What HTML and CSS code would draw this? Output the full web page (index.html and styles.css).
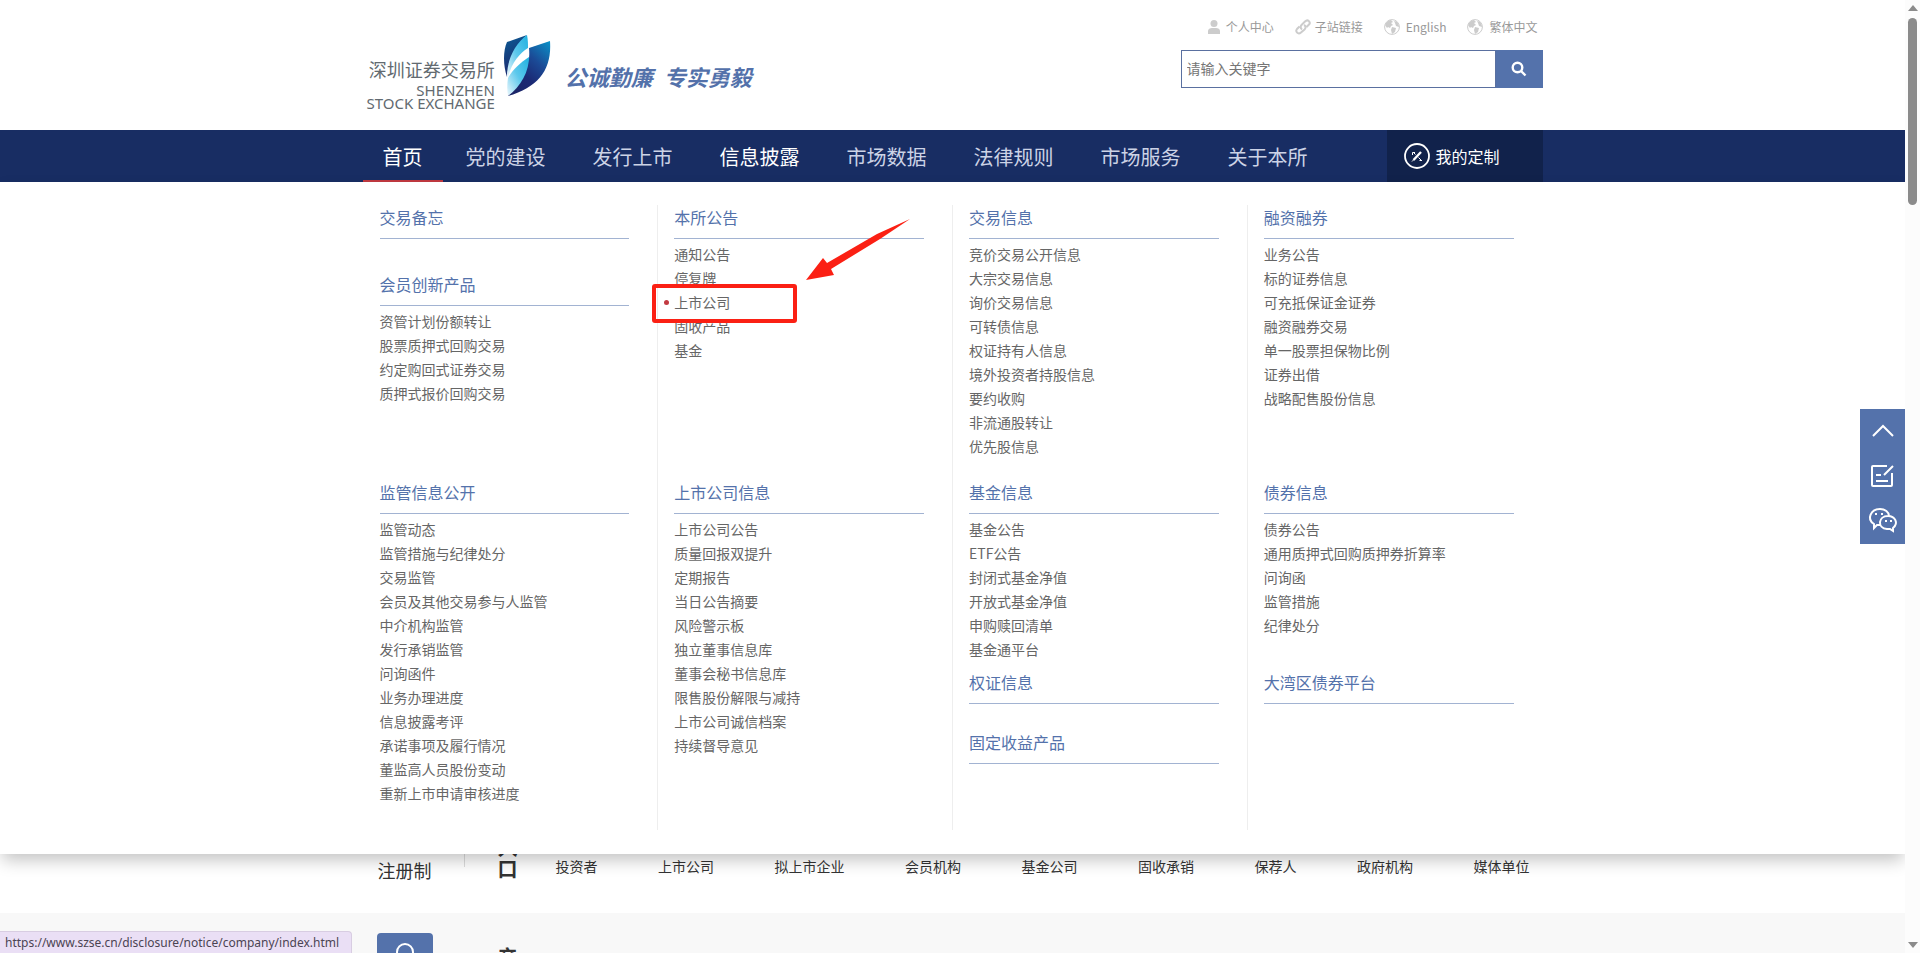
FILE: index.html
```html
<!DOCTYPE html>
<html lang="zh-CN">
<head>
<meta charset="utf-8">
<title>深圳证券交易所</title>
<link rel="stylesheet" href="styles.css">
</head>
<body>
<div class="page">
  <header class="header container">
    <a class="brand" href="#">
      <span class="brand-name">
        <span class="brand-cn">深圳证券交易所</span>
        <span class="brand-en">SHENZHEN</span>
        <span class="brand-en">STOCK EXCHANGE</span>
      </span>
      <svg class="emblem" viewBox="0 0 48 62" aria-hidden="true">
        <defs>
          <linearGradient id="g1" x1="0" y1="0" x2="0.3" y2="1"><stop offset="0" stop-color="#0b5d96"/><stop offset="0.5" stop-color="#14407f"/><stop offset="1" stop-color="#1c2a70"/></linearGradient>
          <linearGradient id="g2" x1="1" y1="0" x2="0" y2="1"><stop offset="0" stop-color="#1fb0e0"/><stop offset="0.5" stop-color="#5cc8ec"/><stop offset="1" stop-color="#eef8fd"/></linearGradient>
          <linearGradient id="g3" x1="1" y1="0" x2="0.3" y2="1"><stop offset="0" stop-color="#0a93c9"/><stop offset="0.4" stop-color="#1b4a96"/><stop offset="0.7" stop-color="#1b2a75"/><stop offset="1" stop-color="#1a2568"/></linearGradient>
        </defs>
        <path fill="url(#g1)" d="M4 7 24 0C14 10 6 22 4 42C0 30 0 16 4 7Z"/>
        <path fill="url(#g2)" d="M24 0C25 5 25 9 25 13C17 18 9 27 5 42H4C4 24 12 9 24 0Z"/>
        <path fill="url(#g2)" d="M26 22C29 38 17 52 5 61C4 54 4 49 5 43C10 34 17 28 26 22Z"/>
        <path fill="url(#g3)" d="M26 13 47 6C49 34 36 52 5 61C19 50 28 35 26 13Z"/>
      </svg>
      <span class="slogan">公诚勤廉&ensp;专实勇毅</span>
    </a>
    <div class="header-side">
      <nav class="quick" aria-label="快捷链接">
        <a href="#"><svg class="ico" viewBox="0 0 16 16"><circle cx="8" cy="4.500" r="3.500"/><path d="M2 15v-3c0-2 2-3 4-3h4c2 0 4 1 4 3v3z"/></svg>个人中心</a>
        <a href="#"><svg class="ico line" viewBox="0 0 16 16"><path d="M7 10.500C5 9 5.500 7 6.500 6L10 2.500c3-3 6 1 4 3L11.500 8M9 6c2 1 2 3 .5 4.500L6 13.500c-3 2.500-6-1-4-3.500L4.500 7.500"/></svg>子站链接</a>
        <a href="#" class="wide"><svg class="ico" viewBox="0 0 16 16"><use href="#globe"/></svg>English</a>
        <a href="#" class="wide"><svg class="ico" viewBox="0 0 16 16"><g id="globe"><circle cx="8" cy="8" r="7.400" fill="none" stroke="#ccc"/><path d="M1 6C2 3 5 1 7 1l2 2-2 1 2 2-2 1-1 2-2-1-1 1zM10 2c3 0 5 3 5 6l-3-1-1-3zM8 8l4 1-1 4-3 2-1-4z"/></g></svg>繁体中文</a>
      </nav>
      <form class="search">
        <input type="text" placeholder="请输入关键字" aria-label="请输入关键字">
        <button type="button" aria-label="搜索"><svg viewBox="0 0 16 16"><circle cx="6.500" cy="6.500" r="4.800"/><path d="M10 10l4.500 4.500"/></svg></button>
      </form>
    </div>
  </header>

  <div class="navbar">
    <div class="container nav-row">
      <nav class="nav" aria-label="主导航">
        <a class="home" href="#">首页</a>
        <a href="#">党的建设</a>
        <a href="#">发行上市</a>
        <a class="open" href="#">信息披露</a>
        <a href="#">市场数据</a>
        <a href="#">法律规则</a>
        <a href="#">市场服务</a>
        <a href="#">关于本所</a>
      </nav>
      <a class="custom" href="#"><svg viewBox="0 0 26 26"><circle cx="13" cy="13" r="12" stroke-width="1.800"/><path stroke-width="2.400" d="M9.500 17l7.500-8"/><path d="M8.500 12V9.500h2.500M9 9l2.500 2.500M15.500 17.500h2.500M14.500 14.500l3 3M8 18.500l2-2"/></svg>我的定制</a>
    </div>

    <div class="mega">
      <div class="container mega-grid">
        <div class="cell">
          <section class="group"><h3><a href="#">交易备忘</a></h3></section>
          <section class="group spaced">
            <h3><a href="#">会员创新产品</a></h3>
            <ul><li><a href="#">资管计划份额转让</a></li><li><a href="#">股票质押式回购交易</a></li><li><a href="#">约定购回式证券交易</a></li><li><a href="#">质押式报价回购交易</a></li></ul>
          </section>
        </div>
        <div class="cell">
          <section class="group">
            <h3><a href="#">本所公告</a></h3>
            <ul><li><a href="#">通知公告</a></li><li><a href="#">停复牌</a></li><li class="current"><a href="#">上市公司</a></li><li><a href="#">固收产品</a></li><li><a href="#">基金</a></li></ul>
            <span class="mark-box"></span>
            <svg class="mark-arrow" viewBox="0 0 104 62" aria-hidden="true"><path d="M0 61 17 39 21 44 71 15 104 0 74 20 25 50 28 56Z"/></svg>
          </section>
        </div>
        <div class="cell">
          <section class="group">
            <h3><a href="#">交易信息</a></h3>
            <ul><li><a href="#">竞价交易公开信息</a></li><li><a href="#">大宗交易信息</a></li><li><a href="#">询价交易信息</a></li><li><a href="#">可转债信息</a></li><li><a href="#">权证持有人信息</a></li><li><a href="#">境外投资者持股信息</a></li><li><a href="#">要约收购</a></li><li><a href="#">非流通股转让</a></li><li><a href="#">优先股信息</a></li></ul>
          </section>
        </div>
        <div class="cell">
          <section class="group">
            <h3><a href="#">融资融券</a></h3>
            <ul><li><a href="#">业务公告</a></li><li><a href="#">标的证券信息</a></li><li><a href="#">可充抵保证金证券</a></li><li><a href="#">融资融券交易</a></li><li><a href="#">单一股票担保物比例</a></li><li><a href="#">证券出借</a></li><li><a href="#">战略配售股份信息</a></li></ul>
          </section>
        </div>
        <div class="cell">
          <section class="group">
            <h3><a href="#">监管信息公开</a></h3>
            <ul><li><a href="#">监管动态</a></li><li><a href="#">监管措施与纪律处分</a></li><li><a href="#">交易监管</a></li><li><a href="#">会员及其他交易参与人监管</a></li><li><a href="#">中介机构监管</a></li><li><a href="#">发行承销监管</a></li><li><a href="#">问询函件</a></li><li><a href="#">业务办理进度</a></li><li><a href="#">信息披露考评</a></li><li><a href="#">承诺事项及履行情况</a></li><li><a href="#">董监高人员股份变动</a></li><li><a href="#">重新上市申请审核进度</a></li></ul>
          </section>
        </div>
        <div class="cell">
          <section class="group">
            <h3><a href="#">上市公司信息</a></h3>
            <ul><li><a href="#">上市公司公告</a></li><li><a href="#">质量回报双提升</a></li><li><a href="#">定期报告</a></li><li><a href="#">当日公告摘要</a></li><li><a href="#">风险警示板</a></li><li><a href="#">独立董事信息库</a></li><li><a href="#">董事会秘书信息库</a></li><li><a href="#">限售股份解限与减持</a></li><li><a href="#">上市公司诚信档案</a></li><li><a href="#">持续督导意见</a></li></ul>
          </section>
        </div>
        <div class="cell">
          <section class="group">
            <h3><a href="#">基金信息</a></h3>
            <ul><li><a href="#">基金公告</a></li><li><a href="#">ETF公告</a></li><li><a href="#">封闭式基金净值</a></li><li><a href="#">开放式基金净值</a></li><li><a href="#">申购赎回清单</a></li><li><a href="#">基金通平台</a></li></ul>
          </section>
          <section class="group tight"><h3><a href="#">权证信息</a></h3></section>
          <section class="group medium"><h3><a href="#">固定收益产品</a></h3></section>
        </div>
        <div class="cell">
          <section class="group">
            <h3><a href="#">债券信息</a></h3>
            <ul><li><a href="#">债券公告</a></li><li><a href="#">通用质押式回购质押券折算率</a></li><li><a href="#">问询函</a></li><li><a href="#">监管措施</a></li><li><a href="#">纪律处分</a></li></ul>
          </section>
          <section class="group spaced"><h3><a href="#">大湾区债券平台</a></h3></section>
        </div>
      </div>
    </div>
  </div>

  <main class="main">
    <section class="band entry">
      <div class="container band-row">
        <a class="reg" href="#">注册制</a>
        <h2 class="vert">入口</h2>
        <nav class="roles" aria-label="入口">
          <a href="#">投资者</a><a href="#">上市公司</a><a href="#">拟上市企业</a><a href="#">会员机构</a><a href="#">基金公司</a><a href="#">固收承销</a><a href="#">保荐人</a><a href="#">政府机构</a><a href="#">媒体单位</a>
        </nav>
      </div>
    </section>
    <section class="band product">
      <div class="container product-row">
        <a class="tile" href="#" aria-label="搜索"><svg viewBox="0 0 56 56"><circle cx="28" cy="19" r="8"/><path d="M34 26l8 8"/></svg></a>
        <h2 class="vert">产品</h2>
      </div>
    </section>
  </main>

  <div class="tools">
    <button type="button" aria-label="返回顶部"><svg viewBox="0 0 45 45"><path d="M13 27l10-10 10 10"/></svg></button>
    <button type="button" aria-label="反馈"><svg viewBox="0 0 45 45"><path d="M27 12H13a1 1 0 0 0-1 1v18a1 1 0 0 0 1 1h18a1 1 0 0 0 1-1V19M24 21l9-9M16 21h5M16 27h12"/></svg></button>
    <button type="button" aria-label="微信"><svg viewBox="0 0 45 45"><path d="M20 26l-3 0-3 3v-4C6 20 11 10 20 10c5 0 9 3 9 7M28 17c-10 0-11 12-1 13h3l3 2v-3C39 24 35 17 28 17zM16 14v2M22 14v2M26 21v2M31 21v2"/></svg></button>
  </div>
  <div class="status">https://www.szse.cn/disclosure/notice/company/index.html</div>
</div>
<div class="scrollbar" aria-hidden="true">
  <svg viewBox="0 0 10 6"><path d="M5 0l5 6H0z"/></svg>
  <span class="thumb"></span>
  <svg class="down" viewBox="0 0 10 6"><path d="M0 0h10L5 6z"/></svg>
</div>
</body>
</html>
```
FILE: styles.css
```css
* { box-sizing: border-box; }
body {
  margin: 0;
  height: 100vh;
  overflow: hidden;
  display: flex;
  background: #fff;
  color: #333;
  font: 14px/24px "Noto Sans CJK SC", sans-serif;
}
a { color: inherit; text-decoration: none; }
h2, h3, ul { margin: 0; padding: 0; font-weight: 400; list-style: none; }
svg { display: block; }
button { border: 0; padding: 0; }

.page { position: relative; flex: 1; min-width: 0; overflow: hidden; }
.container { max-width: 1180px; margin: 0 auto; }

.header { display: flex; justify-content: space-between; height: 130px; }
.brand { display: flex; align-items: flex-start; padding: 35px 0 0 4px; }
.brand-name { display: flex; flex-direction: column; align-items: flex-end; padding-top: 21px; color: #626a70; }
.brand-cn { margin-bottom: 2px; font-size: 18px; line-height: 26px; }
.brand-en { font: 15px/13px "Noto Sans", sans-serif; }
.emblem { width: 48px; height: 62px; margin-left: 8px; }
.slogan {
  padding: 25px 0 0 14px;
  color: #5371aa;
  font: italic 700 22px/32px KaiTi, "Noto Sans CJK SC", serif;
}
.header-side { width: 362px; padding-top: 15px; }
.quick { display: flex; justify-content: flex-end; gap: 21px; padding-right: 5px; color: #999; font-size: 12px; }
.quick a { display: flex; align-items: center; gap: 4px; }
.quick .wide { gap: 6px; }
.ico { width: 16px; height: 16px; fill: #ccc; }
.ico.line { fill: none; stroke: #ccc; stroke-width: 2; }
.search { display: flex; height: 38px; margin-top: 11px; }
.search input {
  flex: 1;
  min-width: 0;
  border: 1px solid #5a70a0;
  padding: 0 5px 2px;
  font: inherit;
}
.search input::placeholder { color: #757575; }
.search button { display: grid; place-items: center; width: 47px; background: #5472ab; }
.search svg { width: 16px; height: 16px; fill: none; stroke: #fff; stroke-width: 2.4; }

.navbar { position: relative; z-index: 2; background: #182d63; }
.nav-row { display: flex; justify-content: space-between; }
.nav { display: flex; color: #ccd3e6; font-size: 20px; line-height: 50px; }
.nav a { padding: 2px 24px 0 23px; }
.nav .home { padding: 2px 20px 0; color: #fff; box-shadow: inset 0 -2px #c23a41; }
.nav .open { color: #fff; }
.custom {
  display: flex;
  align-items: center;
  gap: 6px;
  width: 156px;
  padding-left: 17px;
  background: #11224b;
  color: #fff;
  font-size: 16px;
}
.custom svg { width: 26px; height: 26px; fill: none; stroke: #fff; stroke-width: 1; }

.mega {
  position: absolute;
  top: 100%;
  left: 0;
  right: 0;
  padding: 23px 0 24px;
  background: #fff;
  box-shadow: 0 8px 16px -2px rgba(0, 0, 0, .24);
}
.mega-grid { display: grid; grid-template-columns: repeat(4, 1fr); padding-left: 1px; }
.cell { padding: 0 28px 22px 16px; border-right: 1px solid #eee; }
.cell:nth-child(4n) { border-right-color: transparent; }
.cell:nth-child(n+5) { padding-bottom: 25px; }
.group { position: relative; }
.group h3 {
  padding-bottom: 8px;
  border-bottom: 1px solid #a2b3d2;
  color: #5472ab;
  font-size: 16px;
  line-height: 25px;
}
.group ul { padding-top: 3px; color: #666; }
.group.tight { margin-top: 9px; }
.group.medium { margin-top: 26px; }
.group.spaced { margin-top: 33px; }
.current { position: relative; }
.current::before {
  content: "";
  position: absolute;
  top: 10px;
  left: -10px;
  width: 5px;
  height: 5px;
  border-radius: 50%;
  background: #c23a41;
}
.mark-box {
  position: absolute;
  top: 79px;
  left: -22px;
  width: 145px;
  height: 39px;
  border: 4px solid #fb2014;
  border-radius: 3px;
}
.mark-arrow { position: absolute; top: 14px; left: 132px; width: 104px; height: 62px; fill: #fb2014; }

.band-row, .product-row { display: flex; align-items: flex-start; }
.entry { padding-top: 655px; height: 731px; }
.reg { width: 102px; padding: 21px 0 0 15px; font-size: 18px; }
.entry .band-row { background: linear-gradient(#ddd, #ddd) 101px 0 / 1px 30px no-repeat; }
.vert { width: 20px; margin-left: 33px; font-size: 20px; font-weight: 700; line-height: 21px; }
.roles { flex: 1; display: flex; justify-content: space-between; padding: 17px 13px 0 38px; }
.product { height: 200px; padding-top: 20px; background: #f8f8f8; }
.product-row { padding-left: 14px; }
.tile { width: 56px; height: 56px; border-radius: 4px; background: #5472ab; }
.tile svg { fill: none; stroke: #fff; stroke-width: 2; }
.product .vert { margin: 13px 0 0 65px; }

.tools { position: absolute; z-index: 3; right: 0; top: 409px; display: flex; flex-direction: column; background: #5472ab; }
.tools button { width: 45px; height: 45px; background: none; }
.tools svg { fill: none; stroke: #fff; stroke-width: 2; }

.status {
  position: absolute;
  z-index: 4;
  left: 0;
  bottom: 0;
  padding: 0 12px 0 5px;
  border: 1px solid #d8cde2;
  border-width: 1px 1px 0 0;
  border-radius: 0 4px 0 0;
  background: #eadff5;
  color: #4b4453;
  font: 12px/21px "Noto Sans", sans-serif;
}
.scrollbar { flex: none; display: flex; flex-direction: column; align-items: center; width: 15px; padding: 5px 0; background: #fcfcfc; }
.scrollbar svg { width: 10px; height: 6px; fill: #8b8b8b; }
.thumb { width: 9px; height: 187px; margin-top: 7px; border-radius: 5px; background: #8b8b8b; }
.scrollbar .down { margin-top: auto; }
```
